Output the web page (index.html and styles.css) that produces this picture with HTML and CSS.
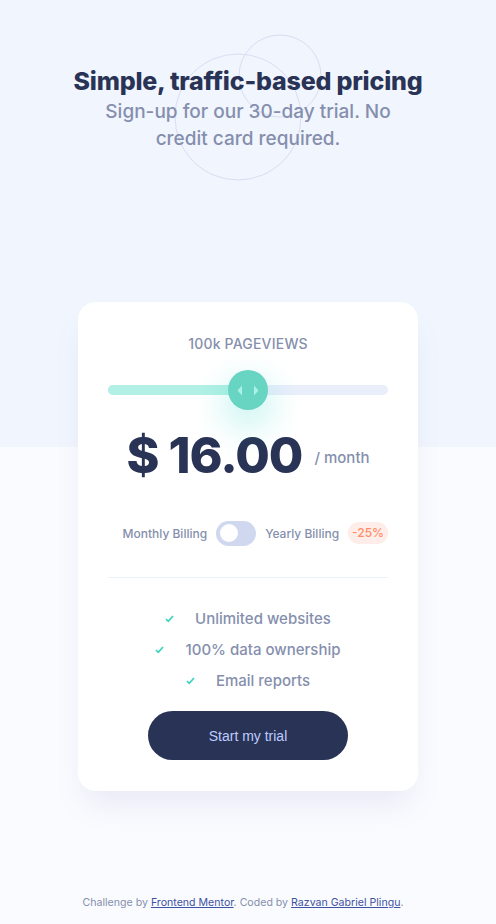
FILE: index.html
```html
<!DOCTYPE html>
<html lang="en">
<head>
<meta charset="utf-8">
<title>Interactive pricing component</title>
<link rel="stylesheet" href="styles.css">
</head>
<body>
<div class="page">
  <header class="hero">
    <svg class="pattern" width="160" height="160" viewBox="0 0 160 160" aria-hidden="true">
      <circle cx="65" cy="92" r="63" fill="none" stroke="#d9ddf2" stroke-width="1"/>
      <circle cx="107" cy="51" r="41" fill="none" stroke="#d9ddf2" stroke-width="1"/>
    </svg>
    <h1 class="title">Simple, traffic-based pricing</h1>
    <p class="subtitle">Sign-up for our 30-day trial. No credit card required.</p>
  </header>

  <main class="card">
    <p class="views">100k PAGEVIEWS</p>
    <div class="slider">
      <div class="track"><div class="fill"></div></div>
      <div class="thumb">
        <svg width="22" height="11" viewBox="0 0 22 11" aria-hidden="true">
          <path d="M5 0.5 V10.5 L0.5 5.5 Z" fill="#a9f2e7"/>
          <path d="M17 0.5 V10.5 L21.5 5.5 Z" fill="#a9f2e7"/>
        </svg>
      </div>
    </div>
    <div class="price">
      <span class="amount">$ 16.00</span>
      <span class="period">/ month</span>
    </div>
    <div class="billing">
      <span class="billing-label">Monthly Billing</span>
      <span class="toggle"><span class="knob"></span></span>
      <span class="billing-label">Yearly Billing</span>
      <span class="badge">-25%</span>
    </div>
    <hr class="divider">
    <ul class="features">
      <li><svg class="check" width="9" height="8" viewBox="0 0 9 8" aria-hidden="true"><path d="M1 4.2 L3.3 6.3 L8 1" fill="none" stroke="#3fd4bd" stroke-width="1.8"/></svg>Unlimited websites</li>
      <li><svg class="check" width="9" height="8" viewBox="0 0 9 8" aria-hidden="true"><path d="M1 4.2 L3.3 6.3 L8 1" fill="none" stroke="#3fd4bd" stroke-width="1.8"/></svg>100% data ownership</li>
      <li><svg class="check" width="9" height="8" viewBox="0 0 9 8" aria-hidden="true"><path d="M1 4.2 L3.3 6.3 L8 1" fill="none" stroke="#3fd4bd" stroke-width="1.8"/></svg>Email reports</li>
    </ul>
    <button class="cta" type="button">Start my trial</button>
  </main>

  <footer class="attribution">
    Challenge by <a href="#">Frontend Mentor</a>. Coded by <a href="#">Razvan Gabriel Plingu</a>.
  </footer>
</div>
</body>
</html>
```
FILE: styles.css
```css
* { box-sizing: border-box; }

body {
  margin: 0;
  font-family: Inter, "Noto Sans", sans-serif;
  background: linear-gradient(to bottom, #f1f5fe 0, #f1f5fe 447px, #fafbff 447px);
  color: #858fad;
}

.page {
  min-height: 924px;
  display: flex;
  flex-direction: column;
  align-items: center;
}

.hero {
  position: relative;
  text-align: center;
  padding-top: 66px;
  width: 360px;
}

.pattern {
  position: absolute;
  left: 105px;
  top: 25px;
  z-index: 0;
}

.title {
  position: relative;
  margin: 0;
  font-size: 25px;
  line-height: 30px;
  font-weight: 800;
  color: #293356;
  letter-spacing: -0.2px;
  white-space: nowrap;
}

.subtitle {
  position: relative;
  margin: 2px auto 0;
  width: 300px;
  font-size: 19px;
  line-height: 27px;
  font-weight: 500;
  color: #858fad;
}

.card {
  margin-top: 150px;
  width: 340px;
  background: #fff;
  border-radius: 18px;
  box-shadow: 0 20px 30px -8px rgba(127, 137, 185, 0.15);
  padding: 32px 30px 31px;
  display: flex;
  flex-direction: column;
  align-items: center;
}

.views {
  margin: 0;
  font-size: 14px;
  line-height: 20px;
  font-weight: 500;
  letter-spacing: 0.2px;
  color: #858fad;
}

.slider {
  position: relative;
  width: 100%;
  height: 40px;
  margin-top: 16px;
  display: flex;
  align-items: center;
}

.track {
  width: 100%;
  height: 10px;
  border-radius: 5px;
  background: #eaeefb;
  overflow: hidden;
}

.fill {
  width: 50%;
  height: 100%;
  background: #b2f0e5;
}

.thumb {
  position: absolute;
  left: 120px;
  top: 0;
  width: 40px;
  height: 40px;
  border-radius: 50%;
  background: #68d4c2;
  box-shadow: 0 14px 30px 8px rgba(16, 213, 194, 0.18);
  display: flex;
  align-items: center;
  justify-content: center;
}

.price {
  margin-top: 17px;
  display: flex;
  align-items: center;
  gap: 12px;
  height: 56px;
}

.amount {
  font-size: 50px;
  font-weight: 800;
  color: #293356;
  letter-spacing: -1px;
  line-height: 56px;
}

.period {
  font-size: 15px;
  font-weight: 500;
  color: #858fad;
  margin-top: 4px;
}

.billing {
  align-self: stretch;
  margin-top: 37px;
  display: flex;
  justify-content: flex-end;
  align-items: center;
  gap: 9px;
  height: 26px;
}

.billing-label {
  font-size: 12px;
  font-weight: 500;
  color: #858fad;
}

.toggle {
  width: 40px;
  height: 25px;
  border-radius: 13px;
  background: #cfd8ef;
  display: flex;
  align-items: center;
  padding-left: 4px;
}

.knob {
  width: 18px;
  height: 18px;
  border-radius: 50%;
  background: #fff;
}

.badge {
  font-size: 12px;
  font-weight: 500;
  color: #ff8d68;
  background: #feede8;
  border-radius: 11px;
  padding: 3px 4px;
  line-height: 16px;
}

.divider {
  width: 100%;
  margin: 31px 0 0;
  border: 0;
  border-top: 1px solid #ecf0fb;
}

.features {
  list-style: none;
  margin: 31px 0 0;
  padding: 0;
  display: flex;
  flex-direction: column;
  align-items: center;
  gap: 11px;
}

.features li {
  display: flex;
  align-items: center;
  gap: 21px;
  font-size: 15px;
  font-weight: 500;
  line-height: 20px;
  color: #858fad;
}

.check { flex: none; }

.cta {
  margin-top: 20px;
  width: 200px;
  height: 49px;
  border: 0;
  border-radius: 25px;
  background: #293356;
  color: #bdccff;
  font-family: "Liberation Sans", Arial, sans-serif;
  font-size: 14px;
  cursor: pointer;
}

.attribution {
  margin-top: auto;
  padding: 0 10px 14px 0;
  font-size: 10.6px;
  line-height: 14px;
  color: #858fad;
  text-align: center;
}

.attribution a {
  color: #3e52a3;
}
```
